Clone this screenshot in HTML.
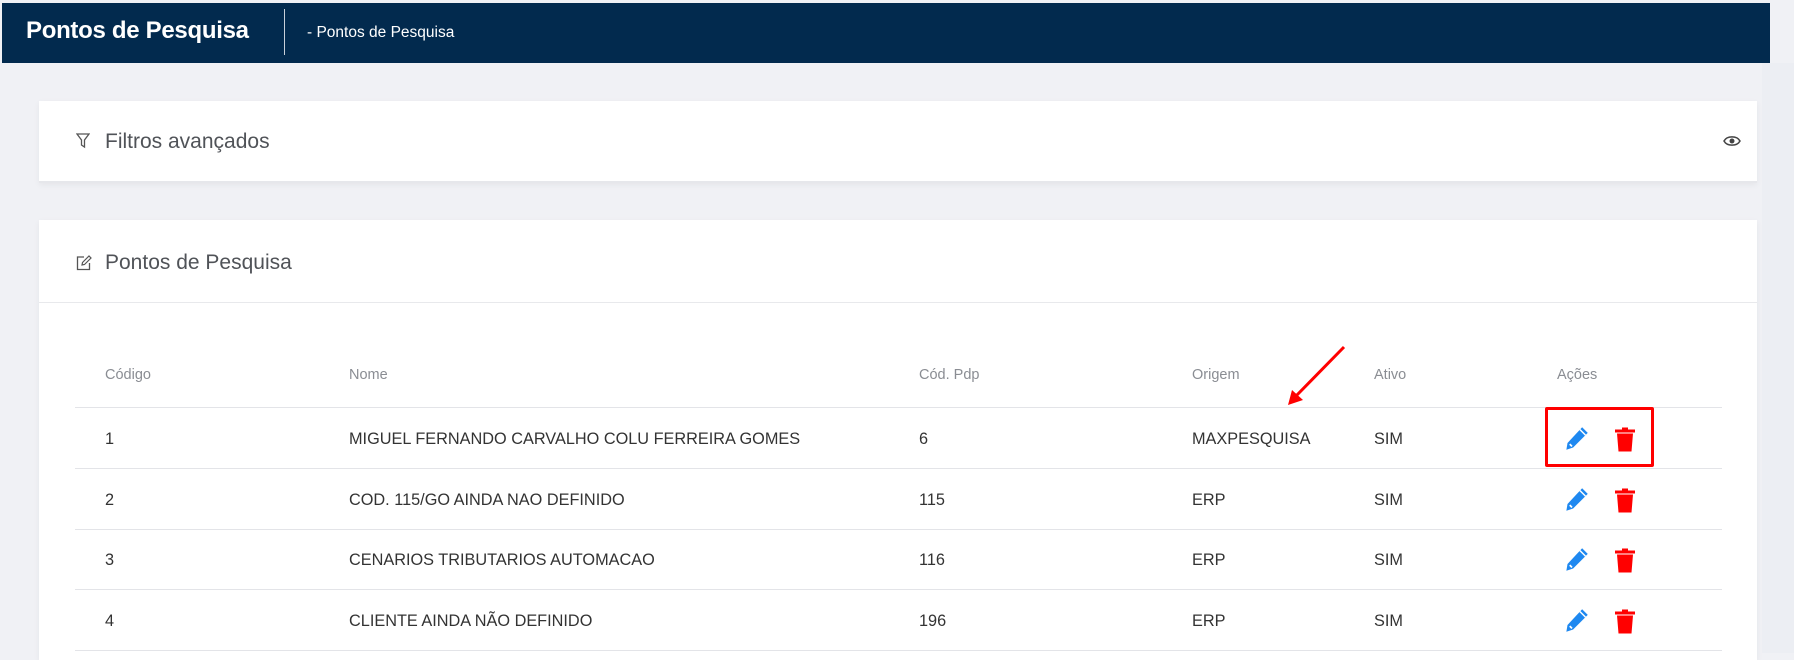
<!DOCTYPE html>
<html><head><meta charset="utf-8"><style>
*{margin:0;padding:0;box-sizing:border-box}
body{width:1794px;height:653px;overflow:hidden;background:#f0f1f5;font-family:"Liberation Sans",sans-serif;position:relative}
.hdr{position:absolute;left:2px;top:3px;width:1768px;height:60px;background:#022a4e;color:#fff}
.hdr .t{position:absolute;left:24px;top:14px;font-size:24px;font-weight:bold;letter-spacing:-0.3px}
.hdr .d{position:absolute;left:282px;top:6px;width:1px;height:46px;background:#c8d0da}
.hdr .b{position:absolute;left:305px;top:21px;font-size:15.5px}
.rs{position:absolute;left:1762px;top:63px;width:32px;height:590px;background:#eceef3}
.card{position:absolute;left:39px;width:1718px;background:#fff;box-shadow:0 2px 6px rgba(0,0,0,0.05)}
.ct{position:absolute;left:66px;font-size:21px;color:#505358}
.row{position:absolute;left:75px;width:1647px;border-bottom:1px solid #e3e4e8;height:60px}
.c{position:absolute;font-size:16.3px;color:#333;top:0;line-height:60px}
.h{color:#8a8d93;font-size:14.5px}
</style></head><body>
<div class="hdr"><div class="t">Pontos de Pesquisa</div><div class="d"></div><div class="b">- Pontos de Pesquisa</div></div>
<div class="rs"></div>
<div class="card" style="top:101px;height:82px;border-bottom:2px solid #e6e7eb">
 <svg style="position:absolute;left:37px;top:32px" width="14" height="16" viewBox="0 0 14 16"><path d="M1 1H13L8.5 7V14L5.5 12V7Z" fill="none" stroke="#555" stroke-width="1.3"/></svg>
 <div class="ct" style="top:29px">Filtros avançados</div>
 <svg style="position:absolute;left:1684px;top:33px" width="18" height="14" viewBox="0 0 18 14"><path d="M1 7C4 1.5 14 1.5 17 7C14 12.5 4 12.5 1 7Z" fill="none" stroke="#444" stroke-width="1.5"/><circle cx="9" cy="7" r="2.5" fill="#444"/></svg>
</div>
<div class="card" style="top:220px;height:440px">
 <svg style="position:absolute;left:37px;top:35px" width="16" height="16" viewBox="0 0 16 16"><path d="M8 2H1.5V14.5H13.5V8" fill="none" stroke="#555" stroke-width="1.3"/><path d="M6 10L6.5 7.5L13 1L15 3L8.5 9.5Z" fill="none" stroke="#555" stroke-width="1.2"/></svg>
 <div class="ct" style="top:31px">Pontos de Pesquisa</div>
 <div style="position:absolute;left:0;top:82px;width:1718px;height:1px;background:#e8e9ec"></div>
</div>
<div class="row" style="top:348px">
 <div class="c h" style="left:30px;top:-3px">Código</div><div class="c h" style="left:274px;top:-3px">Nome</div><div class="c h" style="left:844px;top:-3px">Cód. Pdp</div><div class="c h" style="left:1117px;top:-3px">Origem</div><div class="c h" style="left:1299px;top:-3px">Ativo</div><div class="c h" style="left:1482px;top:-3px">Ações</div>
</div>
<div id="rows"></div>
<script>
var d=[["1","MIGUEL FERNANDO CARVALHO COLU FERREIRA GOMES","6","MAXPESQUISA"],["2","COD. 115/GO AINDA NAO DEFINIDO","115","ERP"],["3","CENARIOS TRIBUTARIOS AUTOMACAO","116","ERP"],["4","CLIENTE AINDA NÃO DEFINIDO","196","ERP"]];
var h="";d.forEach(function(r,i){h+='<div class="row" style="top:'+(409+i*60.5)+'px"><div class="c" style="left:30px">'+r[0]+'</div><div class="c" style="left:274px">'+r[1]+'</div><div class="c" style="left:844px">'+r[2]+'</div><div class="c" style="left:1117px">'+r[3]+'</div><div class="c" style="left:1299px">SIM</div>'+
'<svg style="position:absolute;left:1488px;top:16px" width="27" height="27" viewBox="0 0 24 24"><path d="M17 2L22 7L9 20L3 22L4 16Z" fill="#1e88f0"/><path d="M6 17L8 19" stroke="#fff" stroke-width="1.5"/><path d="M15 4L20 9" stroke="#fff" stroke-width="1.3"/></svg>'+
'<svg style="position:absolute;left:1539px;top:17px" width="22" height="27" viewBox="0 0 22 26"><path d="M1 3H21V6H1Z M8 1H14V3H8Z" fill="#f00"/><path d="M3 7H19L17.5 25H4.5Z" fill="#f00"/></svg></div>'});
document.getElementById("rows").innerHTML=h;
</script>
<div style="position:absolute;left:1545px;top:407px;width:109px;height:60px;border:3px solid #f00;border-radius:2px"></div>
<svg style="position:absolute;left:0;top:0" width="1794" height="653"><line x1="1344" y1="347" x2="1296" y2="396" stroke="#f00" stroke-width="3"/><path d="M1288 405L1292 390L1303 400Z" fill="#f00"/></svg>
</body></html>
